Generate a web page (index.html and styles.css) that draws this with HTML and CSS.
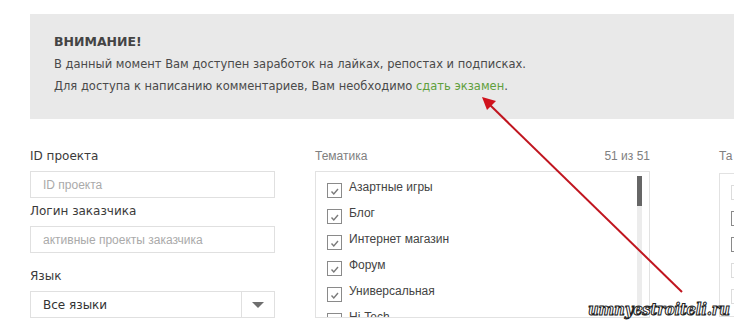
FILE: index.html
```html
<!DOCTYPE html>
<html lang="ru">
<head>
<meta charset="utf-8">
<link rel="stylesheet" href="styles.css">
</head>
<body>
<div class="page">
  <div class="notice">
    <div class="notice-title">ВНИМАНИЕ!</div>
    <div class="notice-line">В данный момент Вам доступен заработок на лайках, репостах и подписках.</div>
    <div class="notice-line">Для доступа к написанию комментариев, Вам необходимо <a class="notice-link" href="#">сдать экзамен</a>.</div>
  </div>

  <div class="form">
    <div class="col col-left">
      <div class="label">ID проекта</div>
      <div class="input"><span class="placeholder">ID проекта</span></div>
      <div class="label">Логин заказчика</div>
      <div class="input"><span class="placeholder">активные проекты заказчика</span></div>
      <div class="label label-gap">Язык</div>
      <div class="select">
        <span class="select-value">Все языки</span>
        <span class="select-btn"><span class="tri"></span></span>
      </div>
    </div>

    <div class="col col-mid">
      <div class="head"><span>Тематика</span><span>51 из 51</span></div>
      <div class="list">
        <div class="row"><span class="cb"><svg viewBox="0 0 13 13" width="13" height="13"><polyline points="3.5,7.5 5.8,10 10,5" /></svg></span><span class="row-text">Азартные игры</span></div>
        <div class="row"><span class="cb"><svg viewBox="0 0 13 13" width="13" height="13"><polyline points="3.5,7.5 5.8,10 10,5" /></svg></span><span class="row-text">Блог</span></div>
        <div class="row"><span class="cb"><svg viewBox="0 0 13 13" width="13" height="13"><polyline points="3.5,7.5 5.8,10 10,5" /></svg></span><span class="row-text">Интернет магазин</span></div>
        <div class="row"><span class="cb"><svg viewBox="0 0 13 13" width="13" height="13"><polyline points="3.5,7.5 5.8,10 10,5" /></svg></span><span class="row-text">Форум</span></div>
        <div class="row"><span class="cb"><svg viewBox="0 0 13 13" width="13" height="13"><polyline points="3.5,7.5 5.8,10 10,5" /></svg></span><span class="row-text">Универсальная</span></div>
        <div class="row"><span class="cb"><svg viewBox="0 0 13 13" width="13" height="13"><polyline points="3.5,7.5 5.8,10 10,5" /></svg></span><span class="row-text">Hi-Tech</span></div>
        <div class="scroll-track"><div class="scroll-thumb"></div></div>
      </div>
    </div>

    <div class="col col-right">
      <div class="head"><span>Та</span></div>
      <div class="list list-right">
        <div class="row"><span class="cb cb-light"></span></div>
        <div class="row"><span class="cb"></span></div>
        <div class="row"><span class="cb"></span></div>
        <div class="row"><span class="cb cb-light"></span></div>
        <div class="row"><span class="cb cb-light"></span></div>
      </div>
    </div>
  </div>

  <svg class="arrow" width="734" height="329" viewBox="0 0 734 329">
    <line x1="682" y1="292" x2="490" y2="105" />
    <polygon points="482,97 496,101 487,110" />
  </svg>
  <div class="watermark">umnyestroiteli.ru</div>
</div>
</body>
</html>
```
FILE: styles.css
```css
html, body {
  margin: 0;
  padding: 0;
  background: #ffffff;
}

.page {
  position: relative;
  box-sizing: border-box;
  width: 734px;
  height: 329px;
  padding-top: 14px;
  overflow: hidden;
  font-family: "DejaVu Sans", Verdana, sans-serif;
}

.notice {
  margin-left: 30px;
  padding: 17px 24px 22px;
  background: #e9e9e9;
  color: #4a4a4a;
  font-size: 11.5px;
  line-height: 22px;
}

.notice-title {
  font-weight: bold;
  font-size: 12.5px;
  color: #444;
}

.notice-link {
  color: #5f9f3c;
  text-decoration: none;
}

.form {
  display: flex;
  margin-top: 24px;
  padding-left: 30px;
}

.col-left {
  width: 245px;
  flex: none;
}

.col-mid {
  width: 335px;
  flex: none;
  margin-left: 40px;
}

.col-right {
  width: 140px;
  flex: none;
  margin-left: 69px;
}

.label {
  font-size: 12px;
  line-height: 26px;
  color: #3a3a3a;
  margin-bottom: 2px;
}

.label-gap {
  margin-top: 10px;
}

.input {
  box-sizing: border-box;
  height: 27px;
  border: 1px solid #e0e0e0;
  padding-left: 12px;
  display: flex;
  align-items: center;
}

.placeholder {
  font-family: "Liberation Sans", Arial, sans-serif;
  font-size: 12px;
  color: #aaaaaa;
}

.select {
  box-sizing: border-box;
  height: 27px;
  border: 1px solid #e0e0e0;
  display: flex;
  align-items: stretch;
}

.select-value {
  flex: 1;
  display: flex;
  align-items: center;
  padding-left: 12px;
  font-size: 12px;
  color: #333;
}

.select-btn {
  width: 32px;
  border-left: 1px solid #e0e0e0;
  display: flex;
  align-items: center;
  justify-content: center;
}

.tri {
  width: 0;
  height: 0;
  border-left: 6px solid transparent;
  border-right: 6px solid transparent;
  border-top: 6px solid #6e6e6e;
}

.head {
  display: flex;
  justify-content: space-between;
  font-family: "Liberation Sans", Arial, sans-serif;
  font-size: 12px;
  line-height: 26px;
  color: #808080;
  margin-bottom: 2px;
}

.col-right .head {
  white-space: nowrap;
}

.list {
  position: relative;
  box-sizing: border-box;
  height: 147px;
  border: 1px solid #e2e2e2;
  padding: 2px 0 0 11px;
  overflow: hidden;
}

.list-right {
  margin-top: 4px;
  height: 144px;
}

.row {
  display: flex;
  align-items: center;
  height: 26px;
}

.cb {
  box-sizing: border-box;
  width: 15px;
  height: 15px;
  border: 1px solid #8a8a8a;
  background: #fff;
  margin-top: 6px;
  display: flex;
  align-items: center;
  justify-content: center;
  flex: none;
}

.cb svg polyline {
  fill: none;
  stroke: #7a7a7a;
  stroke-width: 1.4;
}

.cb-light {
  border-color: #dcdcdc;
}

.row-text {
  margin-left: 7px;
  font-family: "Liberation Sans", Arial, sans-serif;
  font-size: 12px;
  color: #444;
}

.scroll-track {
  position: absolute;
  left: 321px;
  top: 4px;
  width: 5px;
  height: 131px;
  background: #ececec;
}

.scroll-thumb {
  width: 5px;
  height: 30px;
  background: #666;
}

.arrow {
  position: absolute;
  left: 0;
  top: 0;
}

.arrow line {
  stroke: #c0151f;
  stroke-width: 2;
}

.arrow polygon {
  fill: #d0121c;
}

.watermark {
  position: absolute;
  left: 588px;
  top: 300px;
  font-family: "DejaVu Serif Condensed", "DejaVu Serif", serif;
  font-stretch: condensed;
  font-style: italic;
  font-weight: bold;
  font-size: 16.5px;
  letter-spacing: -0.2px;
  color: #ffffff;
  -webkit-text-stroke: 1px #222;
  white-space: nowrap;
}
```
